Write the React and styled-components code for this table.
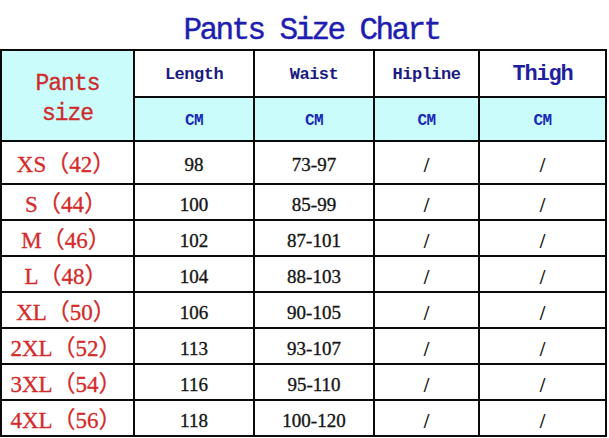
import React from "react";
import styled, { createGlobalStyle } from "styled-components";

const GlobalStyle = createGlobalStyle`
  html, body {
    margin: 0;
    padding: 0;
    background: #ffffff;
  }
`;

const rows = [
  ["XS（42）", "98", "73-97"],
  ["S（44）", "100", "85-99"],
  ["M（46）", "102", "87-101"],
  ["L（48）", "104", "88-103"],
  ["XL（50）", "106", "90-105"],
  ["2XL（52）", "113", "93-107"],
  ["3XL（54）", "116", "95-110"],
  ["4XL（56）", "118", "100-120"],
];

const widths = [133, 120, 120, 105, 127];

const App = () => {
  return (
    <Page>
      <GlobalStyle />
      <Title>Pants Size Chart</Title>
      <Chart>
        <colgroup>
          {widths.map((w, i) => (
            <col key={i} style={{ width: w }} />
          ))}
        </colgroup>
        <tbody>
          <HeadRow>
            <SizeHead rowSpan={2}>
              Pants
              <br />
              size
            </SizeHead>
            <HeadCell>Length</HeadCell>
            <HeadCell>Waist</HeadCell>
            <HeadCell>Hipline</HeadCell>
            <HeadCell $big>Thigh</HeadCell>
          </HeadRow>
          <UnitRow>
            <UnitCell>CM</UnitCell>
            <UnitCell>CM</UnitCell>
            <UnitCell>CM</UnitCell>
            <UnitCell>CM</UnitCell>
          </UnitRow>
          {rows.map(([size, length, waist], i) => (
            <DataRow key={size} $first={i === 0}>
              <SizeCell>{size}</SizeCell>
              <NumCell>{length}</NumCell>
              <NumCell>{waist}</NumCell>
              <SlashCell>/</SlashCell>
              <SlashCell>/</SlashCell>
            </DataRow>
          ))}
        </tbody>
      </Chart>
    </Page>
  );
};

const Page = styled.div`
  width: 609px;
  height: 438px;
  overflow: hidden;
  background: #fff;
`;

const Title = styled.h1`
  margin: 0;
  height: 49px;
  box-sizing: border-box;
  padding: 15px 0 0 14px;
  text-align: center;
  font-family: "Liberation Mono", monospace;
  font-weight: normal;
  font-size: 31px;
  letter-spacing: -2.6px;
  line-height: 32px;
  color: #1d1db0;
  -webkit-text-stroke: 0.4px #1d1db0;
`;

const Chart = styled.table`
  border-collapse: collapse;
  table-layout: fixed;
  width: 607px;

  td {
    border: 2px solid #0a0a0a;
    padding: 0;
    text-align: center;
    vertical-align: middle;
    overflow: hidden;
  }
`;

const HeadRow = styled.tr`
  height: 47px;
`;

const UnitRow = styled.tr`
  height: 44px;
  background: #c9fcfb;
`;

const DataRow = styled.tr`
  height: ${(p) => (p.$first ? "43px" : "36px")};
`;

const SizeHead = styled.td`
  background: #c9fcfb;
  font-family: "Liberation Mono", monospace;
  font-size: 23px;
  letter-spacing: -1px;
  line-height: 30px;
  color: #cf2a2a;
  -webkit-text-stroke: 0.3px #cf2a2a;
  && {
    padding-top: 6px;
  }
`;

const HeadCell = styled.td`
  font-family: "Liberation Mono", monospace;
  font-weight: bold;
  font-size: ${(p) => (p.$big ? "22px" : "17px")};
  letter-spacing: ${(p) => (p.$big ? "-1.2px" : "-0.5px")};
  line-height: 24px;
  color: ${(p) => (p.$big ? "#1f1fa0" : "#1a1a80")};
  && {
    padding-top: 3px;
  }
`;

const UnitCell = styled.td`
  font-family: "Liberation Mono", monospace;
  font-weight: bold;
  font-size: 16px;
  letter-spacing: -0.5px;
  line-height: 20px;
  color: #1a2ab8;
  && {
    padding-top: 4px;
  }
`;

const SizeCell = styled.td`
  font-family: "Liberation Serif", "Noto Sans CJK SC", serif;
  font-size: 23px;
  line-height: 24px;
  color: #d42a2a;
  white-space: nowrap;
  -webkit-text-stroke: 0.3px #d42a2a;
  && {
    padding: 5px 3px 0 0;
  }
`;

const NumCell = styled.td`
  font-family: "Liberation Serif", serif;
  font-size: 19px;
  line-height: 22px;
  color: #151515;
  -webkit-text-stroke: 0.35px #151515;
  && {
    padding-top: 5px;
  }
`;

const SlashCell = styled.td`
  font-family: "Liberation Serif", serif;
  font-weight: bold;
  font-size: 20px;
  line-height: 22px;
  color: #151515;
  && {
    padding-top: 5px;
  }
`;

export default App;
